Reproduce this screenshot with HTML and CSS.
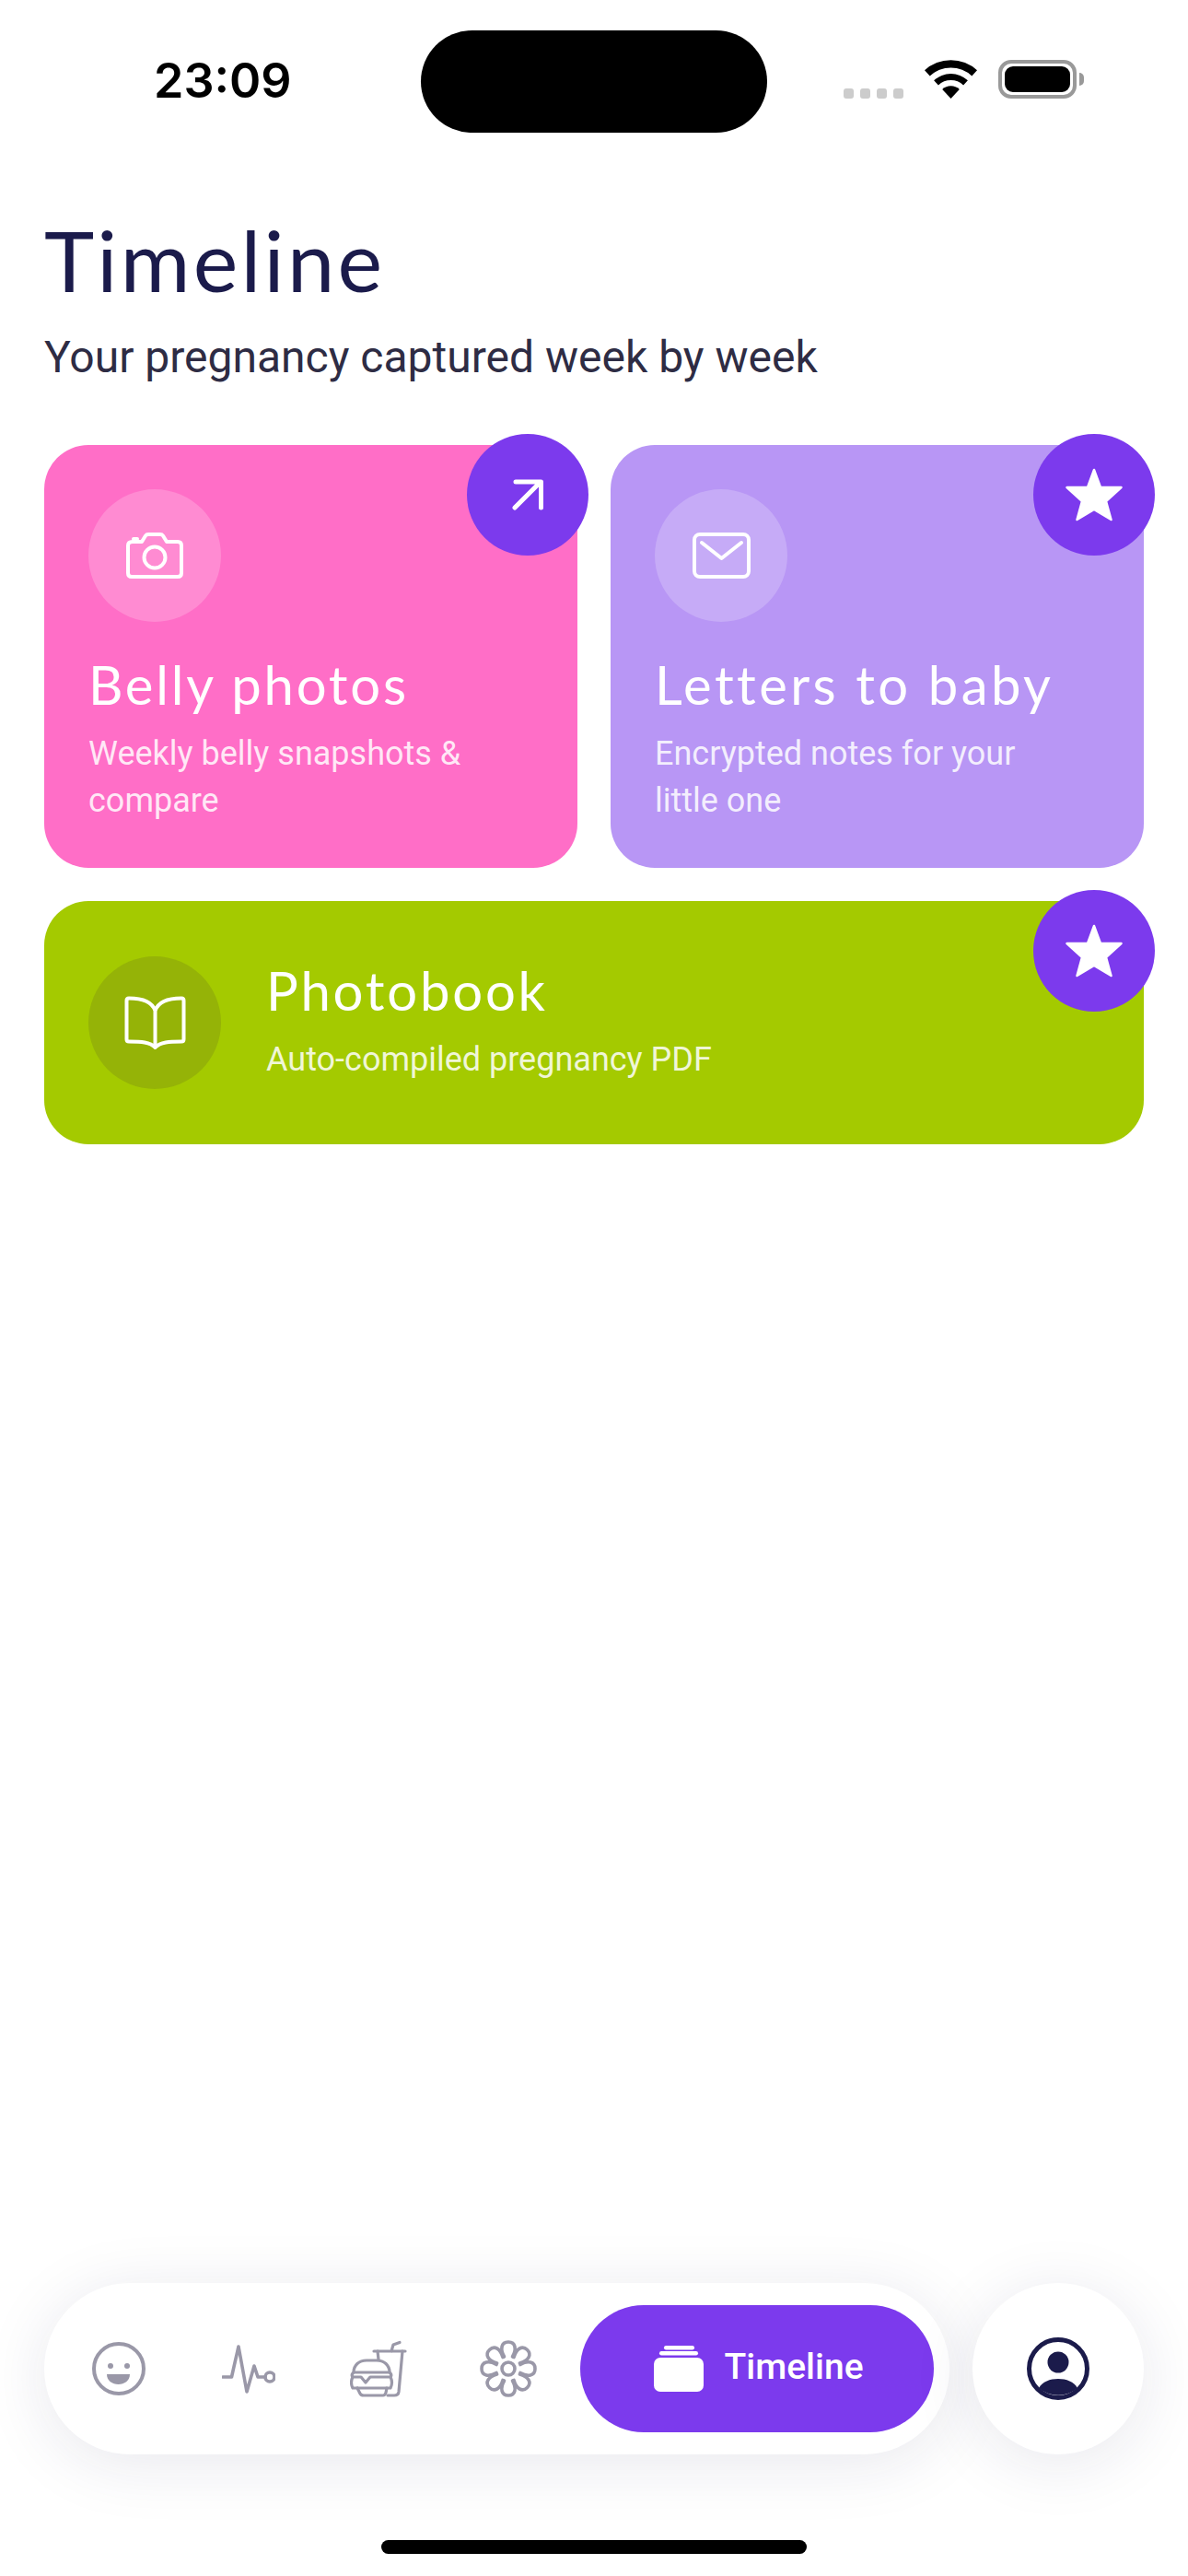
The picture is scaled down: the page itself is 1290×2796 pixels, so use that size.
FILE: index.html
```html
<!DOCTYPE html>
<html lang="en">
<head>
  <meta charset="UTF-8" />
  <meta name="viewport" content="width=device-width, initial-scale=1.0" />
  <title>Timeline</title>
  <link rel="stylesheet" href="styles.css">
</head>
<body>
  <div class="screen">
    <div class="status-bar">
      <div class="status-time">23:09</div>
      <div class="island"></div>
      <div class="status-icons">
        <div class="signal"><span></span><span></span><span></span><span></span></div>
        <svg class="wifi" width="57" height="42" viewBox="0 0 57 42">
          <path d="M0 11.3A42 42 0 0 1 57 11.3L51.3 17.5A33.5 33.5 0 0 0 5.7 17.5Z"/>
          <path d="M10.1 22.3A27 27 0 0 1 46.9 22.3L42.1 27.4A20 20 0 0 0 14.9 27.4Z"/>
          <path d="M19.2 32A13.7 13.7 0 0 1 37.8 32L28.5 42Z"/>
        </svg>
        <div class="battery"><div class="battery-fill"></div></div>
        <div class="battery-nub"></div>
      </div>
    </div>

    <header class="page-head">
      <h1>Timeline</h1>
      <p>Your pregnancy captured week by week</p>
    </header>

    <main class="cards">
      <section class="card card-pink">
        <div class="badge">
          <svg width="34" height="34" viewBox="0 0 34 34" fill="none" stroke="#fff" stroke-width="5" stroke-linecap="round" stroke-linejoin="round"><path d="M3 31L30 4M4 3H31.5V31"/></svg>
        </div>
        <div class="card-icon">
          <svg width="62" height="50" viewBox="0 0 62 50" fill="none" stroke="#fff" stroke-width="4" stroke-linecap="round" stroke-linejoin="round">
            <path d="M7 10H17L21 3.5Q22 2 24 2H37Q39 2 40 3.5L44 10H56Q60 10 60 14V44Q60 48 56 48H6Q2 48 2 44V14Q2 10 7 10Z"/>
            <path d="M8 7H12"/>
            <circle cx="31" cy="27" r="11.5"/>
          </svg>
        </div>
        <h2>Belly photos</h2>
        <p>Weekly belly snapshots &amp; compare</p>
      </section>

      <section class="card card-lilac">
        <div class="badge">
          <svg width="62" height="58" viewBox="0 0 62 58" fill="#fff" stroke="#fff" stroke-width="2.5" stroke-linejoin="round"><path d="M31 2L38 21H60.5L44 36L49.5 56L31 45L12.5 56L18 36L1.5 21H24Z"/></svg>
        </div>
        <div class="card-icon">
          <svg width="63" height="50" viewBox="0 0 63 50" fill="none" stroke="#fff" stroke-width="4" stroke-linecap="round" stroke-linejoin="round">
            <rect x="2" y="2" width="59" height="46" rx="6"/>
            <path d="M10 11L31.5 28L53 11"/>
          </svg>
        </div>
        <h2>Letters to baby</h2>
        <p>Encrypted notes for your little one</p>
      </section>

      <section class="card card-green card-wide">
        <div class="badge">
          <svg width="62" height="58" viewBox="0 0 62 58" fill="#fff" stroke="#fff" stroke-width="2.5" stroke-linejoin="round"><path d="M31 2L38 21H60.5L44 36L49.5 56L31 45L12.5 56L18 36L1.5 21H24Z"/></svg>
        </div>
        <div class="card-icon">
          <svg width="67" height="58" viewBox="0 0 67 58" fill="none" stroke="#fff" stroke-width="4" stroke-linecap="round" stroke-linejoin="round">
            <path d="M33.5 16C30 6 20 2.5 5 2.5Q2.5 2.5 2.5 5V47Q2.5 49.5 5 49.5C18 49.5 28 50 33.5 56C39 50 49 49.5 62 49.5Q64.5 49.5 64.5 47V5Q64.5 2.5 62 2.5C47 2.5 37 6 33.5 16ZM33.5 16V56"/>
          </svg>
        </div>
        <div class="card-text">
          <h2>Photobook</h2>
          <p>Auto-compiled pregnancy PDF</p>
        </div>
      </section>
    </main>

    <nav class="bottom-nav">
      <div class="nav-pill">
        <div class="nav-item">
          <svg width="58" height="58" viewBox="0 0 58 58" fill="none" stroke="#9a98a8" stroke-width="4">
            <circle cx="29" cy="29" r="27"/>
            <circle cx="20" cy="26" r="3" fill="#9a98a8" stroke="none"/>
            <circle cx="38" cy="26" r="3" fill="#9a98a8" stroke="none"/>
            <path d="M16 35H41C41 42 35 46 28.5 46C22 46 16 42 16 35Z" fill="#9a98a8" stroke="none"/>
          </svg>
        </div>
        <div class="nav-item">
          <svg width="58" height="53" viewBox="0 0 58 53" fill="none" stroke="#9a98a8" stroke-width="3.6" stroke-linecap="round" stroke-linejoin="round">
            <path d="M1 35H10.5L18 2L27 51L35 23L39 35H47"/>
            <circle cx="52" cy="35" r="5"/>
          </svg>
        </div>
        <div class="nav-item">
          <svg width="62" height="62" viewBox="0 0 62 62" fill="none" stroke="#9a98a8" stroke-width="3.2" stroke-linecap="round" stroke-linejoin="round">
            <path d="M26 12H60M45 12L47 5L54 2.5"/>
            <path d="M30 12L31 21M57 12L53 56Q52.5 60 48 60H41"/>
            <path d="M4 35C4 27 10 22 18 22H29C37 22 43 27 43 35Z"/>
            <path d="M4 35Q1 37.5 3 40H12L17 46L22 40H44Q46 37.5 43 35"/>
            <path d="M3 40Q0 46 3 52H44Q47 46 44 40"/>
            <path d="M8 52L11 58Q12 60 15 60H36Q38 60 39 57L40 52"/>
          </svg>
        </div>
        <div class="nav-item">
          <svg width="62" height="62" viewBox="-31 -31 62 62" fill="none" stroke="#9a98a8" stroke-width="3.6" stroke-linecap="round" stroke-linejoin="round">
            <circle r="7"/>
            <path id="petal" d="M-4.5 -13C-9 -21 -8 -29 0 -29C8 -29 9 -21 4.5 -13"/>
            <use href="#petal" transform="rotate(45)"/>
            <use href="#petal" transform="rotate(90)"/>
            <use href="#petal" transform="rotate(135)"/>
            <use href="#petal" transform="rotate(180)"/>
            <use href="#petal" transform="rotate(225)"/>
            <use href="#petal" transform="rotate(270)"/>
            <use href="#petal" transform="rotate(315)"/>
          </svg>
        </div>
        <div class="nav-active">
          <svg width="54" height="50" viewBox="0 0 54 50" fill="#fff">
            <rect x="11" y="0" width="33" height="4.5" rx="2.25"/>
            <rect x="6" y="6" width="42" height="4.5" rx="2.25"/>
            <rect x="0" y="13" width="54" height="37" rx="7"/>
          </svg>
          <span>Timeline</span>
        </div>
      </div>
      <div class="nav-profile">
        <svg width="68" height="68" viewBox="0 0 68 68" fill="#1b1b4b">
          <circle cx="34" cy="34" r="31.5" fill="none" stroke="#1b1b4b" stroke-width="5"/>
          <circle cx="34" cy="27" r="11.5"/>
          <path d="M13 55C17 48 25 45 34 45C43 45 51 48 55 55A32 32 0 0 1 13 55Z"/>
        </svg>
      </div>
    </nav>

    <div class="home-bar"></div>
  </div>
</body>
</html>
```

FILE: styles.css
```css
* {
  box-sizing: border-box;
}
html, body {
  margin: 0;
  padding: 0;
}
body {
  background-color: #ffffff;
  font-family: Roboto, sans-serif;
}
.screen {
  width: 1290px;
  height: 2796px;
  display: flex;
  flex-direction: column;
  overflow: hidden;
}

/* status bar */
.status-bar {
  display: grid;
  grid-template-columns: 457px 376px 1fr;
  padding-top: 33px;
  height: 144px;
}
.status-time {
  font-family: Inter, sans-serif;
  font-weight: 600;
  font-size: 52px;
  line-height: 62px;
  padding: 24px 0 0 167px;
  color: #000;
}
.island {
  height: 111px;
  background: #000;
  border-radius: 56px;
}
.status-icons {
  display: flex;
  align-items: flex-start;
  padding: 32px 0 0 83px;
}
.signal {
  display: flex;
  gap: 7px;
  margin: 31px 23px 0 0;
}
.signal span {
  width: 11px;
  height: 11px;
  border-radius: 3px;
  background: #cccccc;
}
.wifi {
  margin-right: 23px;
}
.battery {
  width: 85px;
  height: 42px;
  padding: 3px;
  border: 4px solid #999999;
  border-radius: 14px;
}
.battery-fill {
  height: 100%;
  background: #000;
  border-radius: 9px;
}
.battery-nub {
  width: 5px;
  height: 14px;
  margin: 14px 0 0 3px;
  background: #999999;
  border-radius: 0 5px 5px 0;
}

/* heading */
.page-head {
  padding: 83px 48px 0;
}
.page-head h1 {
  margin: 0;
  font-family: Lato, sans-serif;
  font-weight: 400;
  font-size: 92px;
  line-height: 110px;
  letter-spacing: 3.3px;
  color: #1b1b4b;
}
.page-head p {
  margin: 23px 0 0;
  font-size: 48px;
  line-height: 56px;
  color: #2e2c44;
}

/* cards */
.cards {
  display: grid;
  grid-template-columns: 579px 579px;
  gap: 36px;
  padding: 67px 48px 0;
}
.card {
  position: relative;
  height: 459px;
  padding: 48px 72px 0 48px;
  border-radius: 48px;
  color: #fff;
}
.card-pink {
  background: #ff6ec7;
}
.card-lilac {
  background: #b896f5;
}
.card-green {
  background: #a4ca00;
}
.card-wide {
  grid-column: 1 / 3;
  height: 264px;
  padding: 60px 48px;
  display: flex;
  gap: 49px;
  align-items: center;
}
.badge {
  position: absolute;
  top: -12px;
  right: -12px;
  width: 132px;
  height: 132px;
  border-radius: 50%;
  background: #7c3aed;
  display: flex;
  align-items: center;
  justify-content: center;
}
.card-icon {
  width: 144px;
  height: 144px;
  border-radius: 50%;
  background: rgba(255, 255, 255, 0.2);
  display: flex;
  align-items: center;
  justify-content: center;
  flex-shrink: 0;
}
.card-green .card-icon {
  background: rgba(40, 20, 60, 0.12);
}
.card h2 {
  margin: 33px 0 0;
  font-family: Lato, sans-serif;
  font-weight: 400;
  font-size: 58px;
  line-height: 70px;
  letter-spacing: 2.8px;
}
.card-lilac h2 {
  letter-spacing: 3.4px;
}
.card p {
  margin: 15px 0 0;
  font-size: 36px;
  line-height: 51px;
  color: rgba(255, 255, 255, 0.85);
}
.card-wide h2 {
  margin: -5px 0 0;
}

/* bottom nav */
.bottom-nav {
  margin-top: auto;
  display: flex;
  gap: 25px;
  padding: 0 48px;
}
.nav-pill {
  width: 983px;
  height: 186px;
  padding: 0 17px 0 10px;
  display: flex;
  align-items: center;
  background: #fff;
  border-radius: 93px;
  box-shadow: 0 10px 70px rgba(27, 27, 75, 0.1);
}
.nav-item {
  width: 141px;
  display: flex;
  justify-content: center;
}
.nav-active {
  margin-left: auto;
  width: 384px;
  height: 138px;
  padding-left: 4px;
  display: flex;
  align-items: center;
  justify-content: center;
  gap: 22px;
  background: #7c3aed;
  border-radius: 69px;
  color: #fff;
  font-size: 39px;
  font-weight: 500;
}
.nav-active span {
  margin-bottom: 5px;
}
.nav-profile {
  width: 186px;
  height: 186px;
  border-radius: 50%;
  background: #fff;
  box-shadow: 0 10px 70px rgba(27, 27, 75, 0.1);
  display: flex;
  align-items: center;
  justify-content: center;
}
.home-bar {
  width: 462px;
  height: 15px;
  margin: 93px auto 24px;
  border-radius: 8px;
  background: #000;
}
```
